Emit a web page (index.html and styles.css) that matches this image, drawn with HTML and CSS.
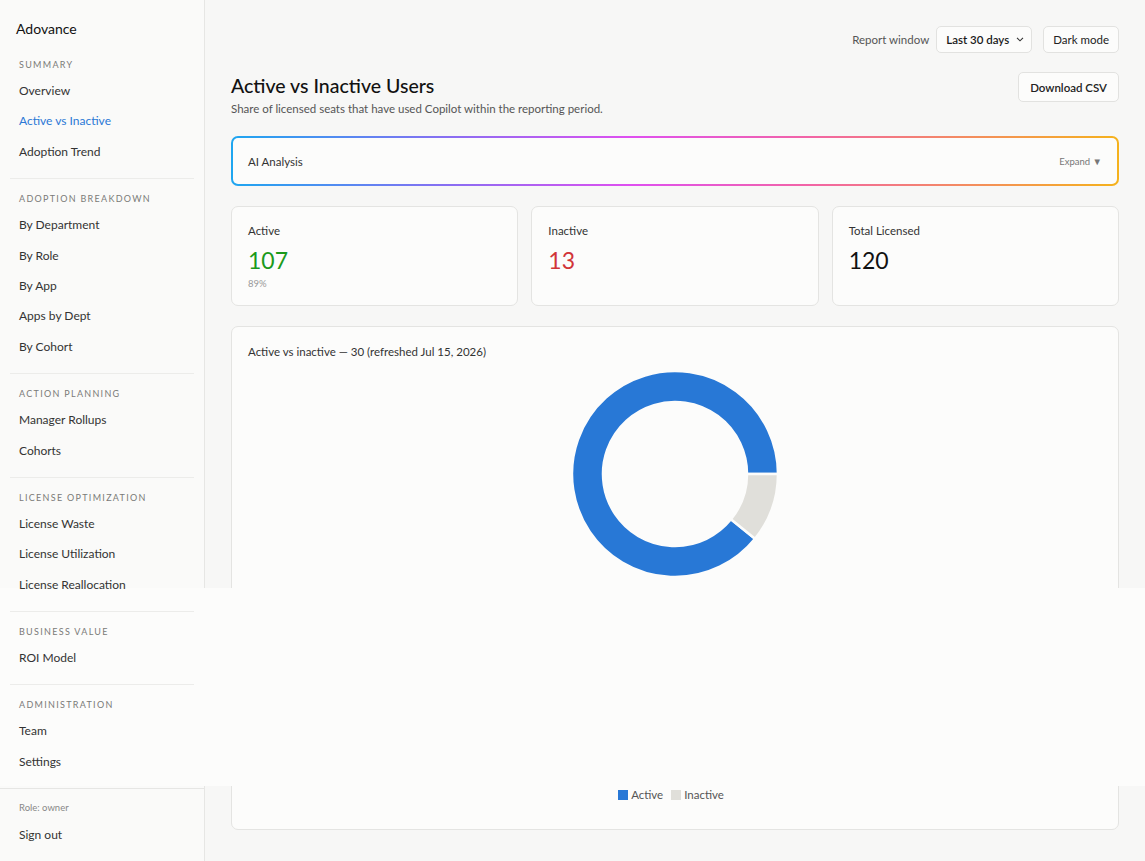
FILE: index.html
```html
<!DOCTYPE html>
<html lang="en">
<head>
    <meta charset="UTF-8">
    <meta name="viewport" content="width=device-width, initial-scale=1.0">
    <title>Adovance - Active vs Inactive</title>
    <link rel="stylesheet" href="styles.css">
</head>
<body>

<div class="layout">
    <!-- Barra lateral -->
    <aside class="sidebar">
        <div class="brand">Adovance</div>

        <div class="nav-group">
            <div class="nav-label">Summary</div>
            <a class="nav-item">Overview</a>
            <a class="nav-item active">Active vs Inactive</a>
            <a class="nav-item">Adoption Trend</a>
        </div>

        <div class="nav-group">
            <div class="nav-label">Adoption Breakdown</div>
            <a class="nav-item">By Department</a>
            <a class="nav-item">By Role</a>
            <a class="nav-item">By App</a>
            <a class="nav-item">Apps by Dept</a>
            <a class="nav-item">By Cohort</a>
        </div>

        <div class="nav-group">
            <div class="nav-label">Action Planning</div>
            <a class="nav-item">Manager Rollups</a>
            <a class="nav-item">Cohorts</a>
        </div>

        <div class="nav-group">
            <div class="nav-label">License Optimization</div>
            <a class="nav-item">License Waste</a>
            <a class="nav-item">License Utilization</a>
            <a class="nav-item">License Reallocation</a>
        </div>

        <div class="nav-group">
            <div class="nav-label">Business Value</div>
            <a class="nav-item">ROI Model</a>
        </div>

        <div class="nav-group last">
            <div class="nav-label">Administration</div>
            <a class="nav-item">Team</a>
            <a class="nav-item">Settings</a>
        </div>

        <div class="sidebar-footer">
            <div class="role">Role: owner</div>
            <a class="nav-item">Sign out</a>
        </div>
    </aside>

    <!-- Conteúdo principal -->
    <main class="main">
        <div class="topbar">
            <span class="topbar-label">Report window</span>
            <div class="select">
                Last 30 days
                <svg width="8" height="5" viewBox="0 0 8 5"><path d="M1 .8l3 3 3-3" fill="none" stroke="#333" stroke-width="1.1"/></svg>
            </div>
            <button class="btn">Dark mode</button>
        </div>

        <div class="page-head">
            <div class="head-text">
                <h1>Active vs Inactive Users</h1>
                <p class="subtitle">Share of licensed seats that have used Copilot within the reporting period.</p>
            </div>
            <button class="btn btn-lg">Download CSV</button>
        </div>

        <div class="ai-box">
            <span class="ai-title">AI Analysis</span>
            <span class="ai-expand">Expand &#9660;</span>
        </div>

        <div class="stats">
            <div class="card stat">
                <div class="stat-label">Active</div>
                <div class="stat-value green">107</div>
                <div class="stat-note">89%</div>
            </div>
            <div class="card stat">
                <div class="stat-label">Inactive</div>
                <div class="stat-value red">13</div>
            </div>
            <div class="card stat">
                <div class="stat-label">Total Licensed</div>
                <div class="stat-value">120</div>
            </div>
        </div>

        <div class="card chart-card">
            <div class="chart-title">Active vs inactive — 30 (refreshed Jul 15, 2026)</div>
            <div class="chart-area">
                <svg class="donut" width="212" height="212" viewBox="0 0 212 212">
                    <path d="M186.04 170.82 A103 103 0 1 1 209 106 L178 106 A72 72 0 1 0 161.95 151.31 Z" fill="#2878d6" stroke="#fcfcfb" stroke-width="2.5"/>
                    <path d="M209 106 A103 103 0 0 1 186.04 170.82 L161.95 151.31 A72 72 0 0 0 178 106 Z" fill="#e0dfda" stroke="#fcfcfb" stroke-width="2.5"/>
                </svg>
                <div class="legend">
                    <span class="swatch blue"></span>Active
                    <span class="swatch grey"></span>Inactive
                </div>
            </div>
        </div>
    </main>
</div>

<!-- faixa clara que cobre a página -->
<div class="band"></div>

</body>
</html>
```

FILE: styles.css
```css
/* Estilos gerais */
body {
    margin: 0;
    background: #f7f7f6;
    font-family: "Segoe UI", Lato, "Liberation Sans", sans-serif;
    color: #1a1a1a;
}

.layout {
    display: flex;
    min-height: 861px;
}

/* Barra lateral */
.sidebar {
    width: 204px;
    flex-shrink: 0;
    background: #fafaf9;
    border-right: 1px solid #e6e6e4;
    display: flex;
    flex-direction: column;
}

.brand {
    position: relative;
    z-index: 2;
    font-size: 14px;
    color: #111;
    padding: 20px 16px 21px;
}

.nav-group {
    position: relative;
    z-index: 2;
    margin: 0 10px 13px;
    padding: 0 0 11px;
    border-bottom: 1px solid #ececea;
}

.nav-group.last {
    border-bottom: none;
    margin-bottom: 0;
}

.nav-label {
    font-size: 9px;
    letter-spacing: 1.3px;
    text-transform: uppercase;
    color: #7a7a78;
    padding: 0 9px;
    height: 14px;
    line-height: 14px;
    margin-bottom: 4px;
}

.nav-item {
    display: block;
    font-size: 12px;
    color: #333;
    padding: 0 9px;
    height: 30.4px;
    line-height: 30.4px;
    cursor: pointer;
}

.nav-item.active {
    color: #2a78d6;
}

.sidebar-footer {
    margin-top: auto;
    border-top: 1px solid #e6e6e4;
    padding: 12px 10px 26px;
}

.role {
    font-size: 9.5px;
    color: #888;
    padding: 0 9px;
    height: 14px;
    line-height: 14px;
    margin-bottom: 5px;
}

/* Conteúdo principal */
.main {
    flex: 1;
    padding: 26px 26px 0;
}

.topbar {
    display: flex;
    justify-content: flex-end;
    align-items: center;
    gap: 7px;
}

.topbar-label {
    font-size: 11.5px;
    color: #555;
}

.select {
    display: flex;
    align-items: center;
    gap: 7px;
    height: 25px;
    padding: 0 7px 0 9px;
    border: 1px solid #e2e2e0;
    border-radius: 5px;
    background: #fcfcfb;
    font-size: 11.5px;
    font-weight: 600;
    color: #1a1a1a;
    margin-right: 4px;
}

.btn {
    font-family: inherit;
    height: 27px;
    padding: 0 9px;
    border: 1px solid #e2e2e0;
    border-radius: 5px;
    background: #fcfcfb;
    font-size: 11.5px;
    color: #222;
    cursor: pointer;
}

.btn-lg {
    height: 30px;
    padding: 0 11px;
    font-weight: 600;
    margin-top: 7px;
}

.page-head {
    display: flex;
    justify-content: space-between;
    align-items: flex-start;
    margin-top: 12px;
}

.head-text {
    padding-top: 8px;
}

h1 {
    font-size: 19.5px;
    font-weight: 500;
    color: #111;
    margin: 0;
    line-height: 26px;
}

.subtitle {
    font-size: 11.5px;
    color: #555;
    margin: 3px 0 0;
}

/* Caixa de análise IA */
.ai-box {
    margin-top: 21px;
    height: 46px;
    border: 2px solid transparent;
    border-radius: 7px;
    background:
        linear-gradient(#fcfcfb, #fcfcfb) padding-box,
        linear-gradient(90deg, #1ea6f0, #8b6df2 25%, #df4ff0 45%, #f264a6 65%, #f5b21c) border-box;
    display: flex;
    justify-content: space-between;
    align-items: center;
    padding: 0 15px;
}

.ai-title {
    font-size: 11.5px;
    color: #333;
}

.ai-expand {
    font-size: 9.5px;
    color: #777;
}

/* Cartões */
.card {
    background: #fcfcfb;
    border: 1px solid #e4e4e2;
    border-radius: 7px;
}

.stats {
    display: grid;
    grid-template-columns: 1fr 1fr 1fr;
    gap: 13px;
    margin-top: 20px;
}

.stat {
    height: 100px;
    padding: 17px 16px 0;
    box-sizing: border-box;
}

.stat-label {
    font-size: 11.5px;
    color: #333;
}

.stat-value {
    font-size: 23px;
    line-height: 30px;
    margin-top: 8px;
    color: #111;
}

.stat-value.green {
    color: #1b9a1b;
}

.stat-value.red {
    color: #d13438;
}

.stat-note {
    font-size: 9.5px;
    color: #999;
    margin-top: 3px;
}

.chart-card {
    margin-top: 20px;
    padding: 16px 16px 26px;
}

.chart-title {
    font-size: 11.5px;
    color: #333;
    line-height: 17px;
}

.chart-area {
    height: 435px;
    margin-top: 8px;
    display: flex;
    flex-direction: column;
    align-items: center;
}

.legend {
    margin-top: auto;
    font-size: 11.5px;
    color: #555;
    display: flex;
    align-items: center;
    line-height: 16px;
    margin-right: 8px;
}

.swatch {
    display: inline-block;
    width: 10px;
    height: 10px;
    margin-right: 3px;
}

.swatch.blue {
    background: #2878d6;
}

.swatch.grey {
    background: #e0dfda;
    margin-left: 8px;
}

/* Faixa clara sobre a página */
.band {
    position: absolute;
    top: 588px;
    left: 0;
    width: 1145px;
    height: 198px;
    background: #fcfcfb;
    z-index: 1;
}
```
